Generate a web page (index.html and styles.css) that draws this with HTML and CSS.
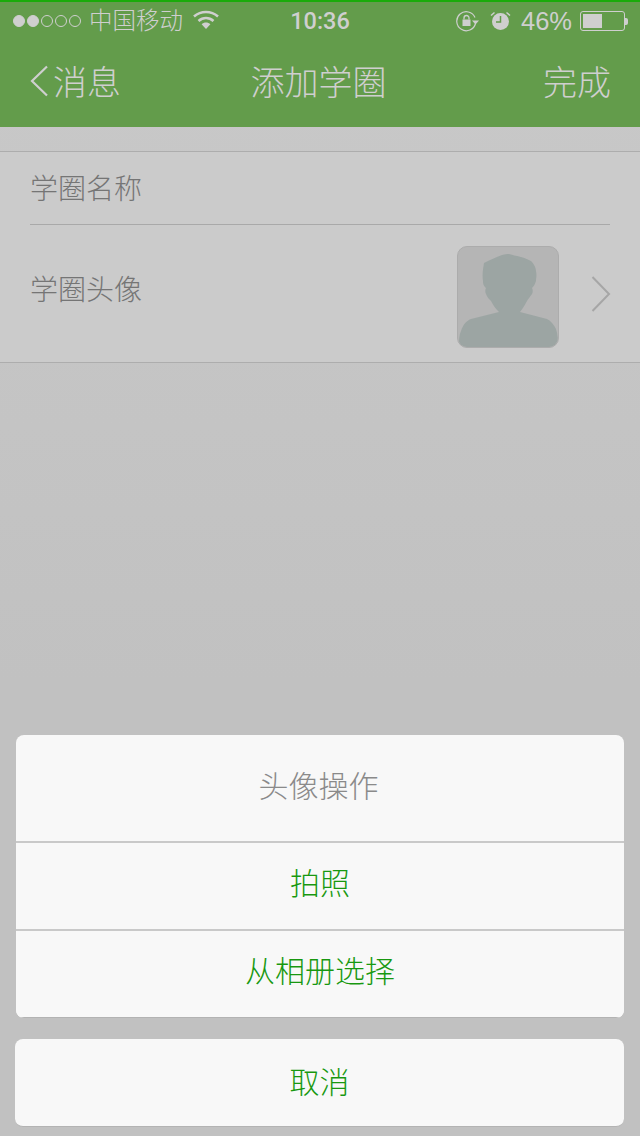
FILE: index.html
```html
<!DOCTYPE html>
<html lang="zh-CN">
<head>
    <meta charset="UTF-8">
    <meta name="viewport" content="width=device-width, initial-scale=1.0">
    <title>添加学圈</title>
    <link rel="stylesheet" href="styles.css">
</head>
<body>
    <div class="page">
        <header class="top">
            <div class="status">
                <div class="status-left">
                    <span class="dots"><i class="on"></i><i class="on"></i><i></i><i></i><i></i></span>
                    <span class="carrier">中国移动</span>
                    <svg class="wifi" width="26" height="20" viewBox="0 0 26 20">
                        <path d="M1 6.500C8 .5 18 .5 25 6.500" fill="none" stroke="#cfcfcf" stroke-width="2.600"/>
                        <path d="M5.500 11C10 7 16 7 20.500 11" fill="none" stroke="#cfcfcf" stroke-width="2.600"/>
                        <path d="M8.600 14.200C11 12 15 12 17.400 14.200L13 19Z" fill="#cfcfcf"/>
                    </svg>
                </div>
                <div class="time">10:36</div>
                <div class="status-right">
                    <svg class="rotate" width="24" height="22" viewBox="0 0 24 22">
                        <path d="M19.500 13.500A9.500 9.500 0 1 1 19 7.500" fill="none" stroke="#cfcfcf" stroke-width="1.200"/>
                        <path d="M16 10.500h7l-3.500 4Z" fill="#cfcfcf"/>
                        <rect x="6.500" y="9.500" width="8" height="6.500" fill="#cfcfcf"/>
                        <path d="M8 9.500V8a2.500 2.500 0 0 1 5 0v1.500" fill="none" stroke="#cfcfcf" stroke-width="1.300"/>
                    </svg>
                    <svg class="alarm" width="21" height="20" viewBox="0 0 21 20">
                        <circle cx="10.500" cy="10.500" r="8.500" fill="#cfcfcf"/>
                        <path d="M10.500 5v6H6" fill="none" stroke="#639c4b" stroke-width="1.500"/>
                        <path d="M1 4.500 4.500 1.500M20 4.500 16.500 1.500" stroke="#cfcfcf" stroke-width="1.500"/>
                    </svg>
                    <span class="percent">46%</span>
                    <span class="battery"><span class="level"></span></span>
                    <span class="tip"></span>
                </div>
            </div>
            <nav class="nav">
                <div class="back">
                    <svg width="18" height="32" viewBox="0 0 18 32">
                        <path d="M17 1.500 2 16l15 14.500" fill="none" stroke="#cfcfcf" stroke-width="2.200"/>
                    </svg>
                    <span>消息</span>
                </div>
                <div class="title">添加学圈</div>
                <div class="done">完成</div>
            </nav>
        </header>

        <section class="form">
            <div class="row name-row">学圈名称</div>
            <div class="row avatar-row">
                <span>学圈头像</span>
                <div class="avatar-side">
                    <div class="avatar">
                        <svg width="100" height="100" viewBox="0 0 100 100">
                            <path d="M1 100C1 93 1 88 3 84 5 78 8 74 13 72L41 65C37 61 35 58 33 54 31 52 29 50 28 47 27 45 27 43 28 41 25 38 25 36 25 34 24 28 25 22 26 16 32 13 38 10 44 8 47 7 49 7 51 7 58 9 66 10 73 14 77 18 78 22 78 24 79 29 78 31 78 34 77 37 76 39 74 41 75 43 75 45 74 47 72 50 70 52 69 54 67 58 65 61 62 65L89 72C93 74 96 78 98 82 100 88 100 94 100 100Z" fill="#9ca5a3"/>
                        </svg>
                    </div>
                    <svg class="arrow" width="20" height="36" viewBox="0 0 20 36">
                        <path d="M1.500 1 18 18 1.500 35" fill="none" stroke="#a6a6a6" stroke-width="2"/>
                    </svg>
                </div>
            </div>
        </section>

        <div class="sheet">
            <div class="sheet-group">
                <div class="sheet-title">头像操作</div>
                <div class="sheet-item">拍照</div>
                <div class="sheet-item last">从相册选择</div>
            </div>
            <div class="sheet-item cancel">取消</div>
        </div>
    </div>
</body>
</html>
```

FILE: styles.css
```css
* {
    box-sizing: border-box;
}
html, body {
    margin: 0;
    padding: 0;
}
body {
    font-family: "Liberation Sans", "Noto Sans CJK SC", sans-serif;
    font-weight: 300;
    background-color: #c2c2c2;
}
.page {
    width: 640px;
    height: 1136px;
    overflow: hidden;
    display: flex;
    flex-direction: column;
    background: linear-gradient(#c9c9c9, #c1c1c1 60%);
}
.top {
    height: 127px;
    background-color: #639c4b;
    border-top: 2px solid #1aab0a;
    color: #cfcfcf;
    flex-shrink: 0;
}
.status {
    height: 38px;
    padding: 0 12px 0 13px;
    display: grid;
    grid-template-columns: 1fr auto 1fr;
    align-items: center;
}
.status-left, .status-right {
    display: flex;
    align-items: center;
}
.status-right {
    justify-content: flex-end;
}
.dots {
    display: flex;
    gap: 2px;
}
.dots i {
    width: 12px;
    height: 12px;
    border: 1px solid #cfcfcf;
    border-radius: 50%;
}
.dots i.on {
    background-color: #cfcfcf;
}
.carrier {
    font-size: 23.5px;
    margin-left: 8px;
    margin-top: -4px;
}
.wifi {
    margin-left: 10px;
    margin-top: -3px;
}
.time {
    font-family: Roboto, sans-serif;
    font-weight: 500;
    font-size: 23.500px;
    margin-left: -1px;
}
.rotate {
    margin-right: 10px;
}
.alarm {
    margin-right: 10px;
}
.percent {
    font-size: 25.5px;
    margin-right: 8px;
}
.battery {
    width: 45px;
    height: 20px;
    border: 1px solid #cfcfcf;
    border-radius: 3px;
    padding: 2px;
    display: block;
}
.level {
    display: block;
    width: 19px;
    height: 14px;
    background-color: #cfcfcf;
}
.tip {
    width: 3px;
    height: 7px;
    background-color: #cfcfcf;
    border-radius: 0 2px 2px 0;
}
.nav {
    height: 87px;
    padding: 0 29px 6px 30px;
    display: grid;
    grid-template-columns: 1fr auto 1fr;
    align-items: center;
    font-size: 34px;
}
.back {
    display: flex;
    align-items: center;
    gap: 5px;
}
.title {
    margin-left: -2px;
    margin-right: 2px;
}
.done {
    text-align: right;
}
.form {
    margin-top: 24px;
    padding-left: 30px;
    background-color: #cbcbcb;
    border-top: 1px solid #adadad;
    border-bottom: 1px solid #adadad;
    color: #757575;
    font-size: 28px;
}
.row {
    display: flex;
    align-items: center;
    justify-content: space-between;
}
.name-row {
    height: 73px;
    margin-right: 30px;
    padding-bottom: 2px;
    border-bottom: 1px solid #a9a9a9;
}
.avatar-row {
    height: 137px;
    padding-bottom: 12px;
    padding-right: 29px;
}
.avatar-side {
    display: flex;
    align-items: center;
    gap: 32px;
    margin-top: 18px;
}
.avatar {
    width: 102px;
    height: 102px;
    border: 1px solid #acacac;
    border-radius: 10px;
    background-color: #b5b5b5;
    overflow: hidden;
}
.avatar svg {
    display: block;
}
.arrow {
    display: block;
    margin-top: -6px;
}
.sheet {
    margin-top: auto;
    padding: 0 16px 9px 15px;
    font-size: 30px;
    color: #189810;
    text-align: center;
}
.sheet-group {
    margin-left: 1px;
    margin-bottom: 21px;
    border-radius: 8px;
    background-color: #f8f8f8;
    overflow: hidden;
}
.sheet-title {
    height: 108px;
    line-height: 104px;
    padding-right: 3px;
    color: #8a8a8a;
    border-bottom: 2px solid #c9c9c9;
}
.sheet-item {
    height: 88px;
    line-height: 82px;
    background-color: #f8f8f8;
    border-bottom: 2px solid #c9c9c9;
}
.sheet-item.last {
    height: 87px;
    border-bottom: 1px solid #b3b3b3;
}
.sheet-item.cancel {
    line-height: 88px;
    border-radius: 8px;
    border-bottom: 1px solid #b3b3b3;
}
```
